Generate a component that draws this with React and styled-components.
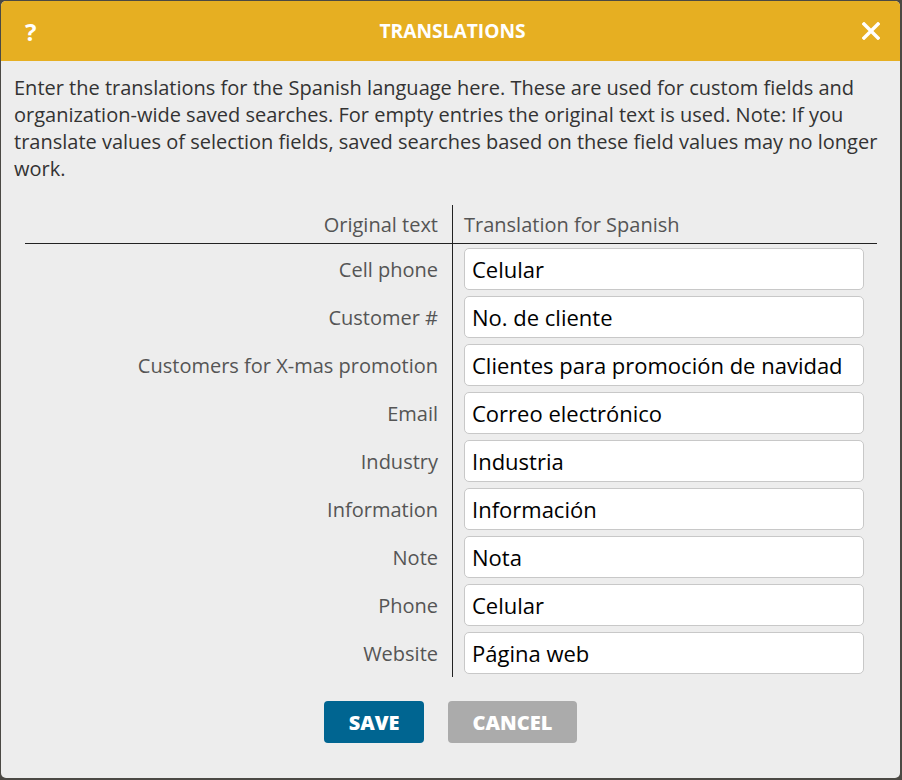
import styled, { createGlobalStyle } from "styled-components";
import { Fragment } from "react";

const GlobalStyle = createGlobalStyle`
  html, body {
    margin: 0;
    padding: 0;
    background: #4b4944;
  }
  body {
    font-family: "Open Sans", "Liberation Sans", sans-serif;
  }
`

const Backdrop = styled.div`
  width: 902px;
  height: 780px;
  padding: 1px 2px 2px 1px;
  box-sizing: border-box;
  background: #4b4944;
`
const Dialog = styled.div`
  height: 100%;
  background: #ededed;
  border-radius: 5px;
  overflow: hidden;
  display: flex;
  flex-direction: column;
`
const Header = styled.div`
  height: 60px;
  background: #e6af22;
  color: white;
  display: flex;
  align-items: center;
  justify-content: space-between;
  padding: 0 20px 0 24px;
  flex-shrink: 0;
`
const HelpIcon = styled.span`
  font-size: 24px;
  font-weight: 700;
  width: 20px;
  margin-top: 1px;
`
const Title = styled.h1`
  margin: 0;
  font-size: 19.2px;
  font-weight: 700;
  margin-top: -1px;
`
const CloseIcon = styled.span`
  width: 20px;
  display: flex;
  justify-content: flex-end;
`
const Intro = styled.p`
  margin: 13px 0 0;
  padding: 0 12px 0 13px;
  font-size: 20px;
  line-height: 27px;
  color: #333;
`
const Table = styled.div`
  margin: 23px 23px 0 24px;
  display: grid;
  grid-template-columns: 428px 1fr;
`
const HeadCell = styled.div`
  height: 39px;
  box-sizing: border-box;
  border-bottom: 1px solid #222;
  display: flex;
  align-items: center;
  font-size: 20px;
  color: #555;
  ${p => p.$left
    ? `justify-content: flex-end; padding-right: 14px; border-right: 1px solid #222;`
    : `padding-left: 11px;`}
`
const Label = styled.div`
  height: ${p => p.$first ? 49 : 48}px;
  box-sizing: border-box;
  display: flex;
  align-items: center;
  justify-content: flex-end;
  padding-right: 14px;
  padding-top: ${p => p.$first ? 1 : 0}px;
  border-right: 1px solid #222;
  font-size: 20px;
  color: #555;
`
const InputCell = styled.div`
  height: ${p => p.$first ? 49 : 48}px;
  box-sizing: border-box;
  display: flex;
  align-items: center;
  padding-left: 11px;
  padding-top: ${p => p.$first ? 1 : 0}px;
`
const Input = styled.input`
  width: 400px;
  height: 42px;
  box-sizing: border-box;
  border: 1px solid #c8c8c8;
  border-radius: 5px;
  background: white;
  padding: 0 7px;
  font-family: "Open Sans", "Liberation Sans", sans-serif;
  font-size: 22px;
  color: #000;
  outline: none;
`
const Buttons = styled.div`
  display: flex;
  justify-content: center;
  gap: 24px;
  margin-top: 24px;
`
const Button = styled.button`
  height: 42px;
  padding: 0 24.5px;
  border: none;
  border-radius: 4px;
  background: ${p => p.$primary ? "#006591" : "#ababab"};
  color: white;
  font-family: "Open Sans", "Liberation Sans", sans-serif;
  font-size: 20px;
  font-weight: 800;
  cursor: pointer;
`

const rows = [
  ["Cell phone", "Celular"],
  ["Customer #", "No. de cliente"],
  ["Customers for X-mas promotion", "Clientes para promoción de navidad"],
  ["Email", "Correo electrónico"],
  ["Industry", "Industria"],
  ["Information", "Información"],
  ["Note", "Nota"],
  ["Phone", "Celular"],
  ["Website", "Página web"],
]

const App = () => {
  return (
    <>
      <GlobalStyle />
      <Backdrop>
        <Dialog>
          <Header>
            <HelpIcon>?</HelpIcon>
            <Title>TRANSLATIONS</Title>
            <CloseIcon>
              <svg width="18" height="18" viewBox="0 0 18 18">
                <path d="M2 2 L16 16 M16 2 L2 16" stroke="white" strokeWidth="3.4" strokeLinecap="square" />
              </svg>
            </CloseIcon>
          </Header>
          <Intro>
            Enter the translations for the Spanish language here. These are used for custom fields and
            organization-wide saved searches. For empty entries the original text is used. Note: If you
            translate values of selection fields, saved searches based on these field values may no longer
            work.
          </Intro>
          <Table>
            <HeadCell $left>Original text</HeadCell>
            <HeadCell>Translation for Spanish</HeadCell>
            {rows.map(([orig, trans], i) => (
              <Fragment key={i}>
                <Label $first={i === 0}>{orig}</Label>
                <InputCell $first={i === 0}>
                  <Input defaultValue={trans} />
                </InputCell>
              </Fragment>
            ))}
          </Table>
          <Buttons>
            <Button $primary>SAVE</Button>
            <Button>CANCEL</Button>
          </Buttons>
        </Dialog>
      </Backdrop>
    </>
  )
}

export default App
